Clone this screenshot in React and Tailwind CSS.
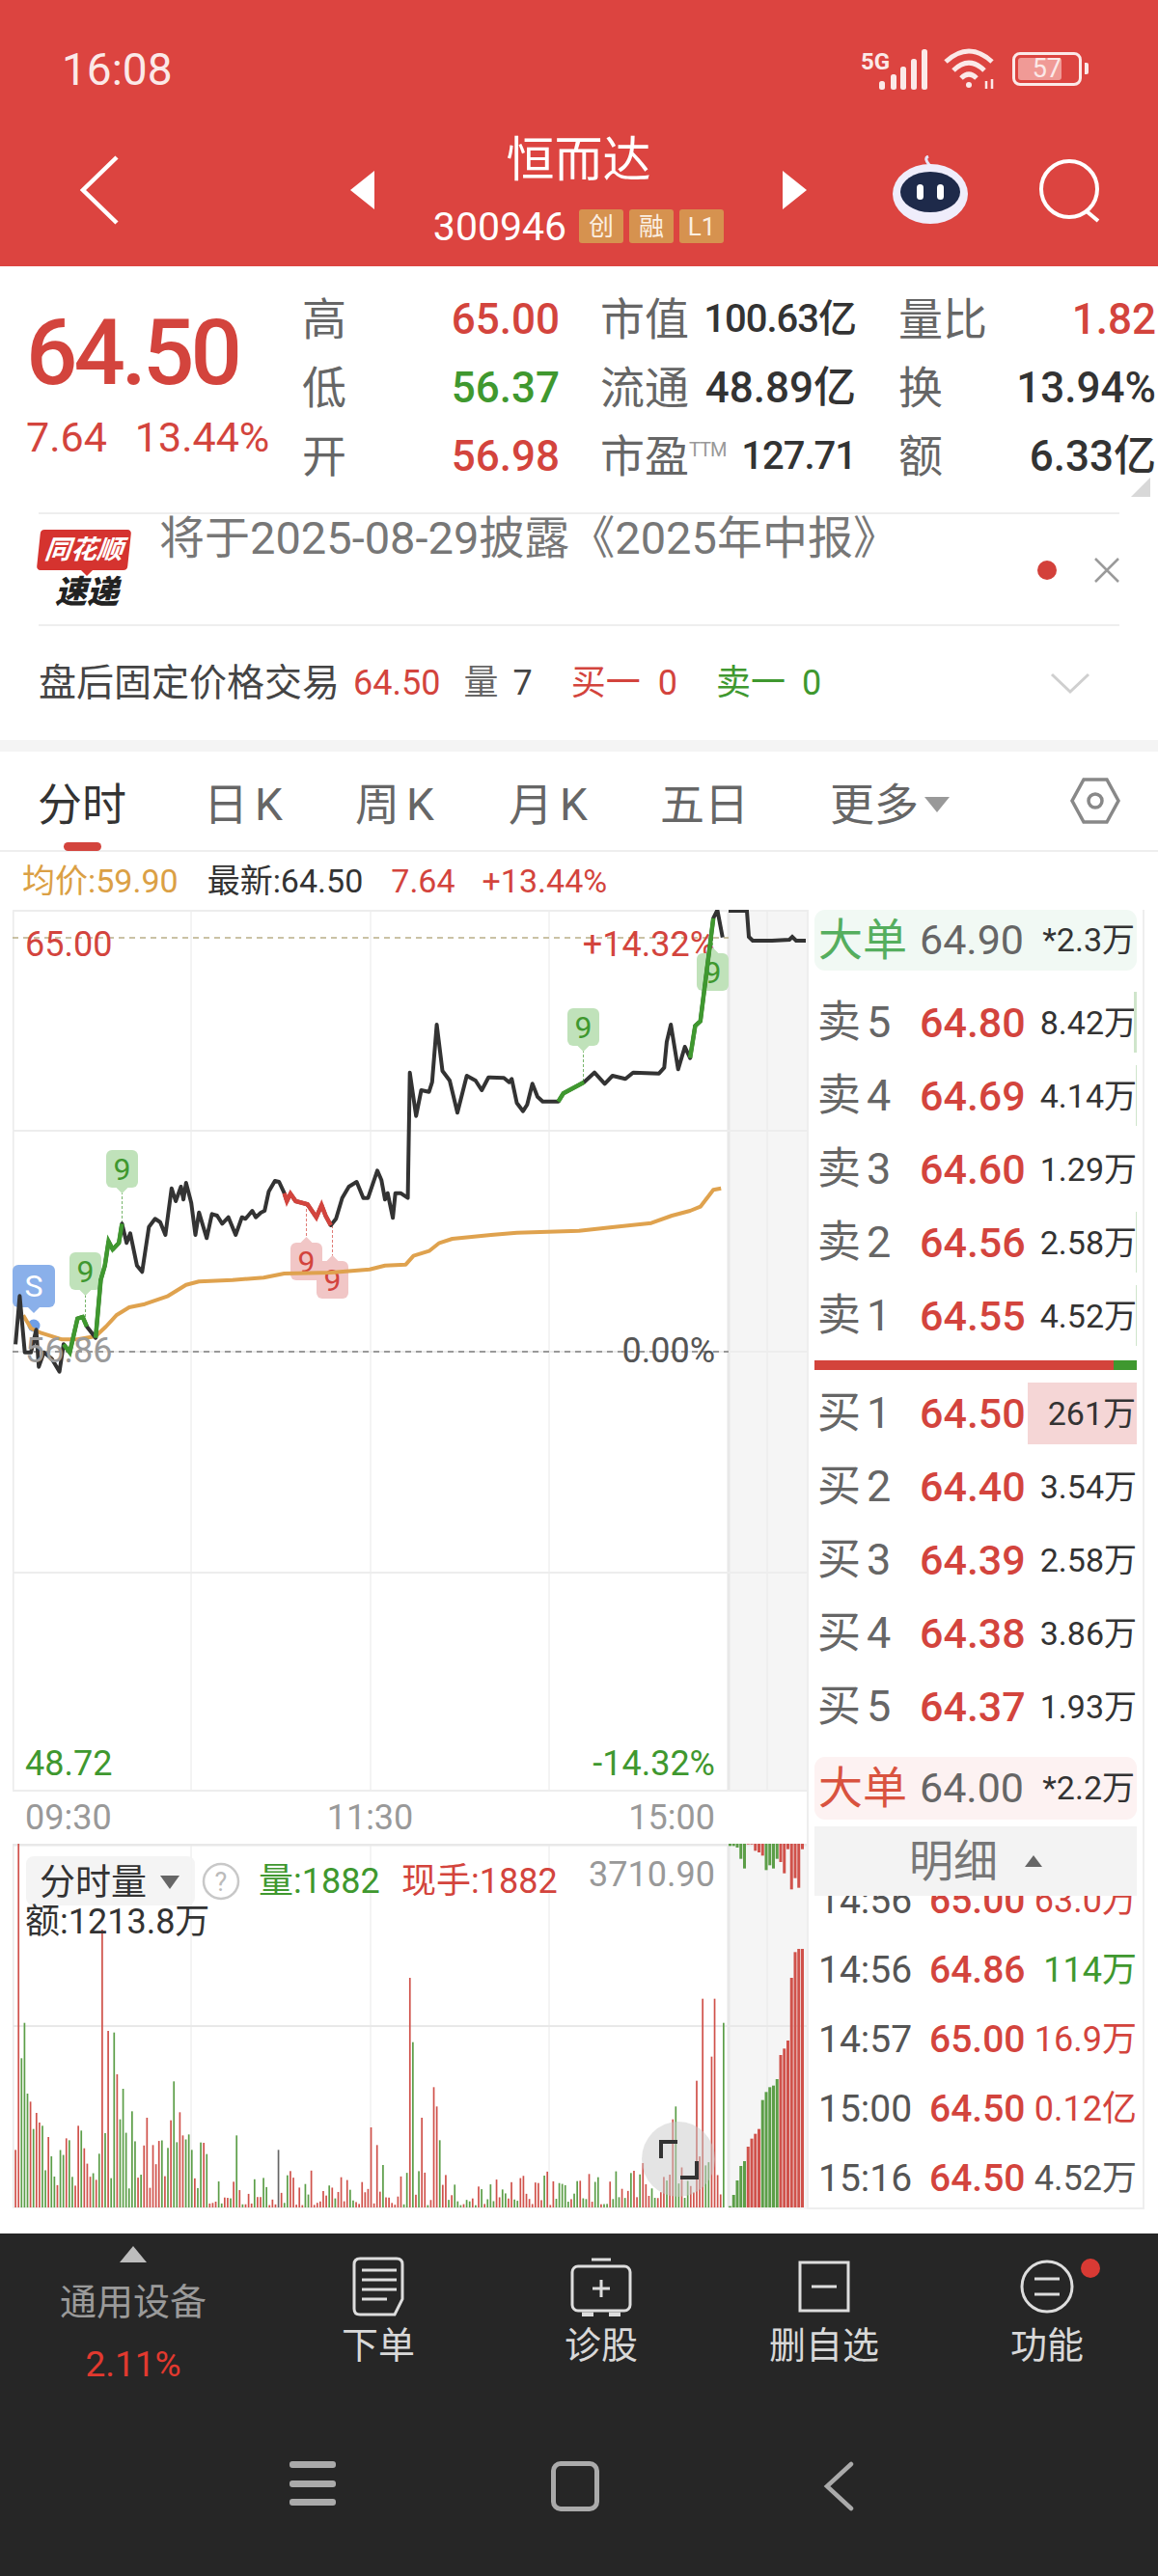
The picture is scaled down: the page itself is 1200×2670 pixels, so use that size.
const RED = "#D3443D"
const GREEN = "#3F982F"

// prices are read off the reference with zoom factors, mapped back to page pixels
const priceRaw = [[30,880],[38,730],[48,905],[60,905],[70,835],[75,950],[85,905],[100,925],[115,965],[123,880],[135,905],[150,800],[160,795],[168,825],[185,860],[195,680],[203,635],[210,560],[218,585],[230,565],[236,505],[245,565],[252,535],[265,635],[275,655],[288,515],[300,490],[310,500],[320,540],[332,395],[340,435],[350,390],[355,430],[360,378],[370,440],[378,540],[385,470],[400,550],[410,475],[420,480],[430,505],[442,485],[456,540],[468,485],[475,490],[488,465],[495,485],[505,470],[512,465],[520,405],[532,372],[540,375],[550,410],[555,435],[562,412],[572,435],[595,445],[612,485],[622,447],[630,480],[640,510],[650,490],[662,425],[675,390],[690,375],[703,425],[712,425],[730,340],[738,370],[745,430],[750,410],[760,487],[765,410],[775,410],[789,425],[793,35],[805,170],[815,90],[830,95],[836,65],[845,-114],[856,30],[870,60],[885,160],[903,45],[920,60],[932,90],[945,50],[975,52],[985,65],[990,55],[1000,130],[1012,155],[1020,135],[1030,70],[1040,110],[1050,125],[1060,125],[1080,125],[1090,100],[1130,65],[1150,35],[1170,70],[1185,45],[1210,55],[1225,35],[1275,38],[1285,20],[1290,-60],[1298,-114],[1312,25],[1325,-45],[1335,-10],[1345,-110],[1355,-125],[1380,-445],[1388,-470],[1398,-385]]
const avgRaw = [[45,790],[60,830],[80,845],[120,865],[150,865],[185,855],[205,825],[225,790],[250,765],[280,755],[325,730],[360,695],[385,685],[450,680],[510,673],[550,660],[640,657],[715,647],[745,635],[785,632],[800,605],[830,590],[850,565],[875,552],[950,540],[1000,533],[1120,527],[1180,517],[1260,503],[1300,480],[1335,465],[1355,452],[1380,400],[1395,395]]

const toPts = (arr) => arr.map(([x, y]) => `${(x / 1.867).toFixed(1)},${(1100 + y / 3).toFixed(1)}`).join(" ")
const seg = (from, to) => toPts(priceRaw.filter(([x]) => x >= from && x <= to))

const volOverrides = [[30,1165,"r"],[37,213,"r"],[43,880,"g"],[47,770,"g"],[53,990,"g"],[60,1015,"r"],[65,1100,"g"],[70,1050,"r"],[76,1080,"r"],[82,1090,"g"],[93,1125,"r"],[99,1185,"g"],[133,1135,"g"],[150,1090,"r"],[156,1105,"g"],[162,1160,"r"],[195,880,"r"],[200,480,"r"],[207,1025,"g"],[212,795,"r"],[218,800,"g"],[225,930,"r"],[235,1070,"g"],[240,975,"g"],[258,1045,"g"],[287,1065,"r"],[293,1100,"r"],[298,1150,"r"],[332,1073,"r"],[338,952,"g"],[349,1048,"r"],[355,1120,"r"],[367,1117,"g"],[372,1165,"g"],[400,1178,"g"],[457,1120,"g"],[537,1165,"k"],[718,1095,"r"],[730,1150,"r"],[742,1212,"g"],[793,630,"r"],[799,830,"g"],[815,1065,"r"],[840,970,"r"],[845,1030,"r"],[850,1135,"g"],[1140,1240,"r"],[1158,1250,"g"],[1228,1230,"r"],[1300,1070,"r"],[1306,1030,"g"],[1345,950,"r"],[1362,695,"r"],[1374,875,"r"],[1380,695,"r"],[1397,770,"g"]]

function buildBars() {
  let seed = 17
  const rnd = () => {
    seed = (seed * 137 + 71) % 1009
    return seed / 1009
  }
  const bars = []
  for (let i = 0; i < 240; i++) {
    const zx = 30 + i * 5.78
    const r = rnd()
    const c = rnd() < 0.5 ? "g" : "r"
    let top
    if (zx > 1398) top = 1345
    else if (zx < 400) top = 1345 - (50 + r * 190)
    else if (zx < 1200) top = 1345 - (8 + r * r * 110)
    else top = 1345 - (30 + r * r * 130)
    bars.push({ zx, top, c })
  }
  volOverrides.forEach(([zx, top, c]) => {
    const i = Math.round((zx - 30) / 5.78)
    bars[i] = { zx: bars[i].zx, top, c }
  })
  return bars
}

const barColor = { r: "#D0524B", g: "#5C9E48", k: "#666" }

const rightBars = [[1340,"g"],[1305,"g"],[1260,"g"],[1215,"g"],[1200,"g"],[1155,"r"],[1130,"r"],[1115,"r"],[1100,"r"],[1010,"g"],[985,"g"],[970,"g"],[965,"g"],[945,"g"],[870,"r"],[850,"r"],[825,"r"],[630,"r"],[550,"r"],[540,"r"],[540,"r"]]
const hangBars = [[220,"g"],[220,"g"],[225,"g"],[260,"g"],[290,"g"],[215,"r"],[215,"r"],[235,"r"],[240,"r"],[250,"r"],[295,"g"],[280,"g"],[290,"g"],[260,"g"],[270,"r"],[305,"r"],[230,"r"],[355,"r"],[320,"r"],[350,"r"],[230,"r"]]

function Marker({ x, y, w = 33, h = 39, label = "9", bg, color, up, from, to }) {
  const cx = x + w / 2
  const tipY = up ? y - 6 : y + h + 6
  return (
    <g>
      <line x1={cx} x2={cx} y1={from} y2={to} stroke={color} strokeWidth="1" strokeDasharray="3 2" opacity="0.7" />
      <rect x={x} y={y} width={w} height={h} rx="6" fill={bg} />
      <polygon points={`${cx - 6},${up ? y : y + h} ${cx + 6},${up ? y : y + h} ${cx},${tipY}`} fill={bg} />
      <text x={cx} y={y + h / 2 + 11} textAnchor="middle" fontSize="32" fill={color}>{label}</text>
    </g>
  )
}

function PriceChart() {
  return (
    <svg width="823" height="914" viewBox="13 943 823 914" className="block">
      <rect x="755" y="943" width="81" height="914" fill="#F5F5F5" />
      {[198, 384, 569, 795].map((x) => <line key={x} x1={x} x2={x} y1="943" y2="1857" stroke="#E8E8E8" strokeWidth="1" />)}
      <line x1="755" x2="755" y1="943" y2="1857" stroke="#E8E8E8" strokeWidth="3" />
      <line x1="13" x2="13" y1="943" y2="1857" stroke="#EAEAEA" strokeWidth="3" />
      {[944, 1172, 1401, 1630, 1856].map((y) => <line key={y} x1="13" x2="836" y1={y} y2={y} stroke="#EDEDED" strokeWidth="2" />)}
      <line x1="13" x2="755" y1="972" y2="972" stroke="#B9AE88" strokeWidth="1.5" strokeDasharray="6 5" />
      <line x1="13" x2="755" y1="1401" y2="1401" stroke="#999" strokeWidth="2" strokeDasharray="6 5" />

      <text x="26" y="991" fontSize="36" fill={RED}>65.00</text>
      <text x="741" y="991" fontSize="36" textAnchor="end" fill={RED}>+14.32%</text>
      <text x="26" y="1840" fontSize="36" fill={GREEN}>48.72</text>
      <text x="741" y="1840" fontSize="36" textAnchor="end" fill={GREEN}>-14.32%</text>

      <Marker x={722} y={988} bg="#C0E2BA" color={GREEN} up from={972} to={988} />
      <Marker x={588} y={1045} bg="#C0E2BA" color={GREEN} from={1083} to={1122} />
      <Marker x={110} y={1192} bg="#C0E2BA" color={GREEN} from={1230} to={1268} />
      <Marker x={72} y={1298} bg="#C0E2BA" color={GREEN} from={1337} to={1365} />
      <Marker x={301} y={1288} bg="#F1C6C6" color={RED} up from={1248} to={1288} />
      <Marker x={328} y={1307} bg="#F1C6C6" color={RED} up from={1270} to={1307} />

      <Marker x={13} y={1311} w={44} h={44} label="S" bg="#8AB0EA" color="#fff" from={1355} to={1360} />
      <circle cx="35" cy="1374" r="6.5" fill="#6F9FE6" />

      <polyline points={toPts(avgRaw)} fill="none" stroke="#DFA24E" strokeWidth="4" strokeLinejoin="round" />
      <polyline points={toPts(priceRaw)} fill="none" stroke="#333" strokeWidth="4" strokeLinejoin="round" />
      <polyline points={seg(123, 168)} fill="none" stroke={GREEN} strokeWidth="4.5" />
      <polyline points={seg(185, 236)} fill="none" stroke={GREEN} strokeWidth="4.5" />
      <polyline points={seg(550, 640)} fill="none" stroke={RED} strokeWidth="4.5" />
      <polyline points={seg(1080, 1130)} fill="none" stroke={GREEN} strokeWidth="4.5" />
      <polyline points={seg(1335, 1380)} fill="none" stroke={GREEN} strokeWidth="4.5" />
      <polyline points="755,944 774,944 776,971 780,975 800,975 818,974 821,971 825,975 835,975" fill="none" stroke="#333" strokeWidth="4" />

      <text x="26" y="1412" fontSize="36" fill="#9A9A9A">56.86</text>
      <text x="741" y="1412" fontSize="36" textAnchor="end" fill="#555">0.00%</text>
    </svg>
  )
}

function VolumeChart() {
  const bars = buildBars()
  return (
    <svg width="823" height="379" viewBox="13 1911 823 379" className="block">
      <rect x="755" y="1911" width="81" height="379" fill="#F5F5F5" />
      {[198, 384, 569, 795].map((x) => <line key={x} x1={x} x2={x} y1="1911" y2="2288" stroke="#E8E8E8" strokeWidth="1" />)}
      <line x1="755" x2="755" y1="1911" y2="2288" stroke="#E8E8E8" strokeWidth="3" />
      <line x1="13" x2="13" y1="1911" y2="2288" stroke="#EAEAEA" strokeWidth="3" />
      <line x1="13" x2="836" y1="1912" y2="1912" stroke="#E8E8E8" strokeWidth="3" />
      <line x1="13" x2="836" y1="2100" y2="2100" stroke="#E8E8E8" strokeWidth="2" />
      <line x1="13" x2="750" y1="2288" y2="2288" stroke="#E8E8E8" strokeWidth="1" />

      {bars.map((b, i) => (
        <rect key={i} x={b.zx / 1.867 - 0.8} y={1840 + b.top / 3} width="1.7" height={2288 - 1840 - b.top / 3} fill={barColor[b.c]} />
      ))}
      {rightBars.map(([top, c], i) => (
        <rect key={i} x={755 + i * 3.75} y={1840 + top / 3} width="3" height={2288 - 1840 - top / 3} fill={barColor[c]} />
      ))}
      {hangBars.map(([bottom, c], i) => (
        <rect key={i} x={755 + i * 3.75} y="1911" width="3" height={1840 + bottom / 3 - 1911} fill={barColor[c]} />
      ))}

      <rect x="27" y="1924" width="175" height="51" rx="8" fill="#F3F3F3" fillOpacity="0.92" />
      <text x="41" y="1964" fontSize="37" fill="#333">分时量</text>
      <polygon points="166,1944 186,1944 176,1958" fill="#666" />
      <circle cx="229" cy="1950" r="18" fill="#fff" stroke="#C8C8C8" strokeWidth="2.5" />
      <text x="229" y="1960" fontSize="27" textAnchor="middle" fill="#BBB">?</text>
      <text x="268" y="1962" fontSize="36" fill={GREEN}>量:1882</text>
      <text x="416" y="1962" fontSize="36" fill={RED}>现手:1882</text>
      <text x="741" y="1955" fontSize="36" textAnchor="end" fill="#999">3710.90</text>
      <text x="26" y="2004" fontSize="36" fill="#333">额:1213.8万</text>

      <ellipse cx="703" cy="2238" rx="38" ry="39" fill="#C9C9C9" fillOpacity="0.5" />
      <path d="M685 2237 V2220 H702 M722 2240 V2257 H705" fill="none" stroke="#333" strokeWidth="4" />
    </svg>
  )
}

function BigOrder({ price, qty, tone, h }) {
  const green = tone === "g"
  return (
    <div className={`mx-[6px] flex shrink-0 items-center rounded-[11px] pl-[4px] pr-[2px] ${h} ${green ? "bg-[#F1F9F4]" : "bg-[#FDF2F2]"}`}>
      <span className={`w-[105px] text-[46px] ${green ? "text-[#55AE5E]" : "text-[#D9533F]"}`}>大单</span>
      <span className="text-[43px] text-[#666]">{price}</span>
      <span className="ml-auto text-[34px] text-[#333]">{qty}</span>
    </div>
  )
}

function QuoteRow({ label, price, qty, tick, highlight }) {
  return (
    <div className="relative flex h-[76px] shrink-0 items-center pl-[9px] pr-[6px]">
      <span className="flex w-[106px] items-center text-[45px] text-[#666]">{label}</span>
      <span className="text-[43px] font-medium text-[#D3443D]">{price}</span>
      {highlight ? (
        <span className="absolute right-[6px] top-[6px] flex h-[64px] w-[113px] items-center justify-end bg-[#F5D6D6] pr-[1px] text-[34px] text-[#333]">{qty}</span>
      ) : (
        <span className="ml-auto text-[34px] text-[#333]">{qty}</span>
      )}
      {tick && <span className={`absolute right-[6px] top-[6px] h-[63px] ${tick}`} />}
    </div>
  )
}

function TradeRow({ time, price, qty, qtyColor }) {
  return (
    <div className="flex h-[72px] shrink-0 items-center pl-[10px] pr-[6px]">
      <span className="w-[115px] text-[39px] text-[#555]">{time}</span>
      <span className="text-[39px] font-medium text-[#D3443D]">{price}</span>
      <span className={`ml-auto text-[36px] ${qtyColor}`}>{qty}</span>
    </div>
  )
}

function InfoCell({ label, sup, value, valueClass, className }) {
  return (
    <div className={`flex items-center justify-between ${className}`}>
      <span className="flex items-start whitespace-nowrap text-[46px] leading-[60px] text-[#666]">
        {label}
        {sup && <span className="mt-[13px] text-[20px] leading-none tracking-[-1px] text-[#999]">{sup}</span>}
      </span>
      <span className={`whitespace-nowrap font-medium ${valueClass}`}>{value}</span>
    </div>
  )
}

function NavItem({ icon, label, className, children }) {
  return (
    <div className={`flex flex-col items-center ${className}`}>
      <div className="flex h-[72px] items-center">{icon}</div>
      <span className="mt-[-3px] text-[38px] text-[#D8D8D8]">{label}</span>
      {children}
    </div>
  )
}

const infoRows = [
  [["高", "65.00", "text-[44px] text-[#D3443D]"], ["市值", "100.63亿", "text-[40px] tracking-[-1px] text-[#333]"], ["量比", "1.82", "text-[44px] text-[#D3443D]"]],
  [["低", "56.37", "text-[44px] text-[#3F982F]"], ["流通", "48.89亿", "text-[44px] text-[#333]"], ["换", "13.94%", "text-[44px] text-[#333]"]],
  [["开", "56.98", "text-[44px] text-[#D3443D]"], ["市盈", "127.71", "text-[40px] tracking-[-1px] text-[#333]", "TTM"], ["额", "6.33亿", "text-[44px] text-[#333]"]],
]

export default function App() {
  return (
    <div className="h-[2670px] w-[1200px] overflow-hidden bg-white font-[Roboto,'Noto_Sans_CJK_SC',sans-serif]">
      <div className="h-[276px] bg-[#DC4440] text-white">
        <div className="flex h-[133px] items-start justify-between pl-[64px] pr-[72px] pt-[46px]">
          <span className="text-[46px] leading-[52px] text-[#FBE9E8]">16:08</span>
          <div className="flex items-center pt-[2px]">
            <svg width="72" height="46" viewBox="0 0 72 46">
              <text x="0" y="24" fontSize="24" fontWeight="700" fill="#FBE9E8">5G</text>
              {[[19,9],[31,16],[41,24],[52,32],[63,42]].map(([x, h]) => <rect key={x} x={x} y={45 - h} width="6" height={h} rx="2.5" fill="#FBE9E8" />)}
            </svg>
            <svg width="58" height="46" viewBox="0 0 58 46" fill="none" stroke="#FBE9E8" strokeWidth="5" className="ml-[13px]">
              <path d="M3 16 Q27 -6 51 16" />
              <path d="M11 25 Q27 9 43 25" />
              <path d="M19 33 Q27 25 35 33" />
              <circle cx="27" cy="40" r="3" fill="#FBE9E8" stroke="none" />
              <path d="M45 36 V44 M51 34 V44" strokeWidth="2.5" />
            </svg>
            <div className="ml-[14px] flex items-center gap-[3px]">
              <div className="flex h-[35px] w-[72px] items-center rounded-[8px] border-[3px] border-[#FBE9E8] p-[3px]">
                <div className="flex h-full w-[45px] items-center justify-end rounded-[3px] bg-[#F09A96] text-[27px] leading-none text-[#FBE9E8]">57</div>
              </div>
              <div className="h-[12px] w-[4px] rounded-r-[2px] bg-[#FBE9E8]" />
            </div>
          </div>
        </div>
        <div className="flex h-[127px] items-center">
          <svg width="40" height="72" viewBox="0 0 40 72" fill="none" stroke="#fff" strokeWidth="4.5" className="ml-[83px]">
            <path d="M38 2 L3 36 L38 70" />
          </svg>
          <div className="ml-[240px] h-0 w-0 border-y-[20px] border-r-[25px] border-y-transparent border-r-white" />
          <div className="flex w-[423px] flex-col items-center">
            <span className="text-[50px] leading-[62px]">恒而达</span>
            <div className="mt-[14px] flex items-center gap-[6px]">
              <span className="mr-[7px] text-[41px] leading-[48px]">300946</span>
              {["创", "融", "L1"].map((t) => (
                <span key={t} className="flex h-[35px] w-[46px] items-center justify-center rounded-[3px] bg-[#D6924F] text-[26px] leading-none text-[#FBEFE2]">{t}</span>
              ))}
            </div>
          </div>
          <div className="h-0 w-0 border-y-[20px] border-l-[25px] border-y-transparent border-l-white" />
          <svg width="80" height="72" viewBox="0 0 80 72" className="ml-[88px]">
            <path d="M39 10 Q33 3 38 1" fill="none" stroke="#E6E4F8" strokeWidth="3" />
            <ellipse cx="40" cy="40" rx="39" ry="31" fill="#EFEDFB" />
            <ellipse cx="40" cy="38" rx="31" ry="21" fill="#1E2A4A" />
            <rect x="26" y="30" width="7" height="16" rx="3.5" fill="#fff" />
            <rect x="47" y="30" width="7" height="16" rx="3.5" fill="#fff" />
          </svg>
          <svg width="66" height="68" viewBox="0 0 66 68" fill="none" stroke="#fff" strokeWidth="4" className="ml-[72px]">
            <circle cx="32" cy="33" r="29" />
            <path d="M50 56 L62 66" />
          </svg>
        </div>
      </div>

      <div className="relative pt-[19px]">
        <div className="flex">
          <div className="w-[313px] pl-[27px]">
            <div className="mt-[16px] text-[94px] font-medium leading-[110px] tracking-[-4px] text-[#D3443D]">64.50</div>
            <div className="mt-[7px] flex gap-[29px] text-[43px] leading-[50px] text-[#D3443D]">
              <span>7.64</span>
              <span>13.44%</span>
            </div>
          </div>
          <div className="flex-1 text-[#333]">
            {infoRows.map((row, i) => (
              <div key={i} className="flex h-[71px]">
                <InfoCell label={row[0][0]} value={row[0][1]} valueClass={row[0][2]} className="w-[267px]" />
                <InfoCell label={row[1][0]} value={row[1][1]} valueClass={row[1][2]} sup={row[1][3]} className="ml-[42px] w-[265px]" />
                <InfoCell label={row[2][0]} value={row[2][1]} valueClass={row[2][2]} className="ml-[44px] w-[267px]" />
              </div>
            ))}
          </div>
        </div>
        <div className="absolute right-[8px] top-[219px] h-0 w-0 border-b-[20px] border-l-[20px] border-b-[#D8D8D8] border-l-transparent" />

        <div className="mx-[40px] mt-[23px] flex h-[118px] border-y-2 border-[#EEE]">
          <div className="mt-[16px] w-[100px]">
            <div className="relative h-[42px] w-[94px] -skew-x-6 rounded-[4px] bg-[#D5332F] text-center text-[27px] font-bold italic leading-[42px] text-white">同花顺</div>
            <div className="mx-auto h-0 w-0 border-x-[6px] border-t-[6px] border-x-transparent border-t-[#D5332F]" />
            <div className="text-center text-[33px] font-black italic leading-[34px] text-[#222]">速递</div>
          </div>
          <span className="ml-[25px] whitespace-nowrap text-[47px] leading-[50px] text-[#777]">将于2025-08-29披露《2025年中报》</span>
          <div className="ml-auto mt-[47px] flex h-[22px] items-center gap-[39px]">
            <span className="h-[20px] w-[20px] rounded-full bg-[#D3403A]" />
            <svg width="26" height="26" viewBox="0 0 26 26" stroke="#9A9A9A" strokeWidth="2.5"><path d="M1 1 L25 25 M25 1 L1 25" /></svg>
          </div>
        </div>

        <div className="flex h-[118px] items-center pl-[40px] text-[36px]">
          <span className="text-[39px] text-[#444]">盘后固定价格交易</span>
          <span className="ml-[14px] text-[#D3443D]">64.50</span>
          <span className="ml-[24px] text-[#666]">量</span>
          <span className="ml-[15px] text-[#444]">7</span>
          <span className="ml-[40px] text-[#D3443D]">买一</span>
          <span className="ml-[18px] text-[#D3443D]">0</span>
          <span className="ml-[40px] text-[#3F982F]">卖一</span>
          <span className="ml-[17px] text-[#3F982F]">0</span>
          <svg width="42" height="24" viewBox="0 0 42 24" fill="none" stroke="#CFCFCF" strokeWidth="3" className="ml-[237px]">
            <path d="M2 3 L21 21 L40 3" />
          </svg>
        </div>
      </div>

      <div className="h-[12px] bg-[#F4F4F4]" />

      <div className="flex h-[104px] items-start border-b-2 border-[#EEE] text-[46px] text-[#666]">
        <div className="flex w-[170px] flex-col items-center pt-[24px]">
          <span className="leading-[62px] text-[#333]">分时</span>
          <span className="mt-[8px] h-[9px] w-[39px] rounded-full bg-[#D3443D]" />
        </div>
        <span className="w-[164px] pt-[24px] text-center leading-[62px]">日<span className="ml-[7px]">K</span></span>
        <span className="w-[150px] pt-[24px] text-center leading-[62px]">周<span className="ml-[7px]">K</span></span>
        <span className="w-[168px] pt-[24px] text-center leading-[62px]">月<span className="ml-[7px]">K</span></span>
        <span className="w-[156px] pt-[24px] text-center leading-[62px]">五日</span>
        <div className="flex w-[228px] items-center justify-center gap-[6px] pt-[24px]">
          <span className="leading-[62px]">更多</span>
          <span className="h-0 w-0 border-x-[13px] border-t-[16px] border-x-transparent border-t-[#999]" />
        </div>
        <svg width="54" height="50" viewBox="0 0 54 50" fill="none" stroke="#888" strokeWidth="3.5" className="ml-[72px] mt-[26px]">
          <path d="M15 3 H39 L51 25 L39 47 H15 L3 25 Z" />
          <circle cx="27" cy="25" r="7" />
        </svg>
      </div>

      <div className="flex h-[60px] items-center pl-[23px] text-[34px]">
        <span className="text-[#DBA045]">均价:59.90</span>
        <span className="ml-[30px] text-[#333]">最新:64.50</span>
        <span className="ml-[29px] text-[#D3443D]">7.64</span>
        <span className="ml-[28px] text-[#D3443D]">+13.44%</span>
      </div>

      <div className="flex h-[1347px] pl-[13px]">
        <div className="w-[823px]">
          <PriceChart />
          <div className="flex h-[54px] items-center justify-between pl-[13px] pr-[95px] text-[36px] text-[#999]">
            <span>09:30</span>
            <span>11:30</span>
            <span>15:00</span>
          </div>
          <VolumeChart />
        </div>
        <div className="flex h-[1347px] w-[350px] flex-col overflow-hidden border-x-2 border-b-2 border-[#EEE]">
          <BigOrder price="64.90" qty="*2.3万" tone="g" h="h-[63px]" />
          <div className="h-[16px] shrink-0" />
          <QuoteRow label={<>卖<span className="ml-[6px]">5</span></>} price="64.80" qty="8.42万" tick="w-[3px] bg-[#CFE5CB]" />
          <QuoteRow label={<>卖<span className="ml-[6px]">4</span></>} price="64.69" qty="4.14万" tick="w-[1px] bg-[#CFE5CB]" />
          <QuoteRow label={<>卖<span className="ml-[6px]">3</span></>} price="64.60" qty="1.29万" />
          <QuoteRow label={<>卖<span className="ml-[6px]">2</span></>} price="64.56" qty="2.58万" tick="w-[1px] bg-[#CFE5CB]" />
          <QuoteRow label={<>卖<span className="ml-[6px]">1</span></>} price="64.55" qty="4.52万" tick="w-[1px] bg-[#CFE5CB]" />
          <div className="mx-[6px] mt-[8px] flex h-[10px] shrink-0">
            <div className="flex-1 bg-[#D3433B]" />
            <div className="w-[24px] bg-[#3F982F]" />
          </div>
          <div className="h-[7px] shrink-0" />
          <QuoteRow label={<>买<span className="ml-[6px]">1</span></>} price="64.50" qty="261万" highlight />
          <QuoteRow label={<>买<span className="ml-[6px]">2</span></>} price="64.40" qty="3.54万" />
          <QuoteRow label={<>买<span className="ml-[6px]">3</span></>} price="64.39" qty="2.58万" />
          <QuoteRow label={<>买<span className="ml-[6px]">4</span></>} price="64.38" qty="3.86万" />
          <QuoteRow label={<>买<span className="ml-[6px]">5</span></>} price="64.37" qty="1.93万" />
          <div className="h-[14px] shrink-0" />
          <BigOrder price="64.00" qty="*2.2万" tone="r" h="h-[65px]" />
          <div className="h-[7px] shrink-0" />
          <div className="relative z-10 mx-[6px] flex h-[72px] shrink-0 items-center justify-center gap-[28px] bg-[#F3F3F3] text-[46px] text-[#777]">
            <span>明细</span>
            <span className="h-0 w-0 border-x-[9px] border-b-[12px] border-x-transparent border-b-[#666]" />
          </div>
          <div className="mt-[-31px] shrink-0">
            <TradeRow time="14:56" price="65.00" qty="63.0万" qtyColor="text-[#D3443D]" />
            <TradeRow time="14:56" price="64.86" qty="114万" qtyColor="text-[#3F982F]" />
            <TradeRow time="14:57" price="65.00" qty="16.9万" qtyColor="text-[#D3443D]" />
            <TradeRow time="15:00" price="64.50" qty="0.12亿" qtyColor="text-[#D3443D]" />
            <TradeRow time="15:16" price="64.50" qty="4.52万" qtyColor="text-[#555]" />
          </div>
        </div>
      </div>

      <div className="h-[25px]" />

      <div className="h-[355px] bg-[#262626]">
        <div className="flex h-[190px]">
          <div className="flex w-[276px] flex-col items-center pt-[13px]">
            <span className="h-0 w-0 border-x-[14px] border-b-[17px] border-x-transparent border-b-[#BDBDBD]" />
            <span className="mt-[18px] text-[38px] leading-[46px] text-[#9A9A9A]">通用设备</span>
            <span className="mt-[20px] text-[37px] leading-[44px] text-[#E2392F]">2.11%</span>
          </div>
          <NavItem
            className="mt-[19px] w-[232px]"
            label="下单"
            icon={
              <svg width="54" height="62" viewBox="0 0 54 62" fill="none" stroke="#DDD" strokeWidth="3">
                <path d="M8 2 H46 Q52 2 52 8 V44 L44 60 H8 Q2 60 2 54 V8 Q2 2 8 2 Z" />
                <path d="M10 14 H46 M10 24 H46 M10 34 H46 M10 44 H36" />
              </svg>
            }
          />
          <NavItem
            className="mt-[19px] w-[230px]"
            label="诊股"
            icon={
              <svg width="64" height="62" viewBox="0 0 64 62" fill="none" stroke="#DDD" strokeWidth="3">
                <path d="M22 3 H42" />
                <rect x="2" y="10" width="60" height="46" rx="6" />
                <path d="M32 24 V42 M23 33 H41" />
                <path d="M12 60 H24 M40 60 H52" strokeWidth="5" />
              </svg>
            }
          />
          <NavItem
            className="mt-[19px] w-[232px]"
            label="删自选"
            icon={
              <svg width="54" height="54" viewBox="0 0 54 54" fill="none" stroke="#DDD" strokeWidth="3">
                <rect x="2" y="2" width="50" height="50" />
                <path d="M14 27 H40" />
              </svg>
            }
          />
          <NavItem
            className="relative mt-[19px] w-[230px]"
            label="功能"
            icon={
              <svg width="56" height="56" viewBox="0 0 56 56" fill="none" stroke="#DDD" strokeWidth="3">
                <circle cx="28" cy="28" r="26" />
                <path d="M15 20 H41 M15 36 H41" />
              </svg>
            }
          >
            <span className="absolute left-[150px] top-[7px] h-[20px] w-[20px] rounded-full bg-[#D93A34]" />
          </NavItem>
        </div>
        <div className="flex h-[165px] items-start pl-[300px] pt-[46px]">
          <svg width="48" height="50" viewBox="0 0 48 50" fill="#AAA">
            <rect y="0" width="48" height="7" rx="3" />
            <rect y="20" width="48" height="7" rx="3" />
            <rect y="39" width="48" height="7" rx="3" />
          </svg>
          <div className="ml-[223px] h-[52px] w-[50px] rounded-[10px] border-[5px] border-[#AAA]" />
          <svg width="32" height="52" viewBox="0 0 32 52" fill="none" stroke="#AAA" strokeWidth="4.5" strokeLinecap="round" className="ml-[232px]">
            <path d="M29 3 L4 26 L29 49" />
          </svg>
        </div>
      </div>
    </div>
  )
}
